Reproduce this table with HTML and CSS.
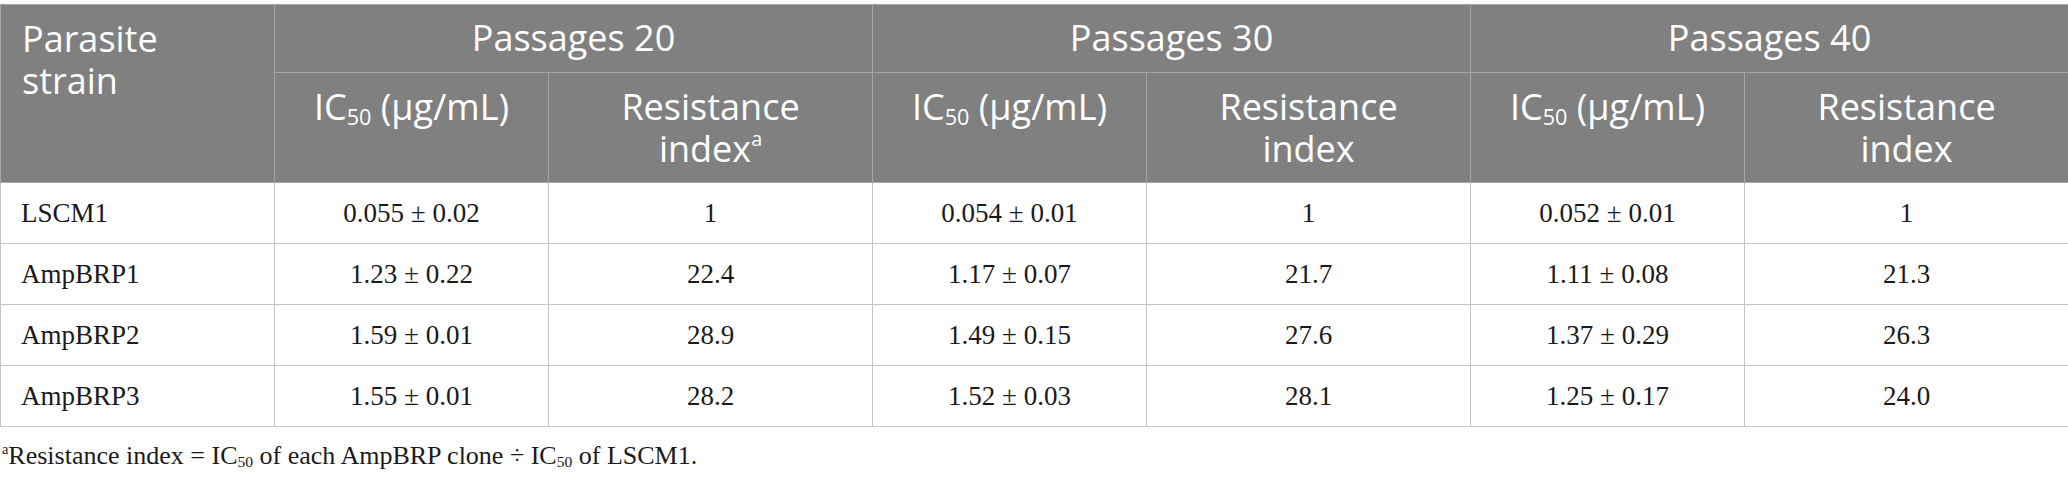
FILE: index.html
```html
<!DOCTYPE html>
<html>
<head>
<meta charset="utf-8">
<link rel="stylesheet" href="styles.css">
</head>
<body>
<table class="data">
  <colgroup>
    <col class="c-strain">
    <col class="c-ic">
    <col class="c-ri">
    <col class="c-ic">
    <col class="c-ri">
    <col class="c-ic">
    <col class="c-ri">
  </colgroup>
  <thead>
    <tr class="h1">
      <th class="strain" rowspan="2">Parasite<br>strain</th>
      <th colspan="2">Passages 20</th>
      <th colspan="2">Passages 30</th>
      <th colspan="2">Passages 40</th>
    </tr>
    <tr class="h2">
      <th>IC<sub>50</sub> (μg/mL)</th>
      <th>Resistance<br>index<sup>a</sup></th>
      <th>IC<sub>50</sub> (μg/mL)</th>
      <th>Resistance<br>index</th>
      <th>IC<sub>50</sub> (μg/mL)</th>
      <th>Resistance<br>index</th>
    </tr>
  </thead>
  <tbody>
    <tr>
      <td class="name">LSCM1</td>
      <td>0.055 ± 0.02</td><td>1</td>
      <td>0.054 ± 0.01</td><td>1</td>
      <td>0.052 ± 0.01</td><td>1</td>
    </tr>
    <tr>
      <td class="name">AmpBRP1</td>
      <td>1.23 ± 0.22</td><td>22.4</td>
      <td>1.17 ± 0.07</td><td>21.7</td>
      <td>1.11 ± 0.08</td><td>21.3</td>
    </tr>
    <tr>
      <td class="name">AmpBRP2</td>
      <td>1.59 ± 0.01</td><td>28.9</td>
      <td>1.49 ± 0.15</td><td>27.6</td>
      <td>1.37 ± 0.29</td><td>26.3</td>
    </tr>
    <tr>
      <td class="name">AmpBRP3</td>
      <td>1.55 ± 0.01</td><td>28.2</td>
      <td>1.52 ± 0.03</td><td>28.1</td>
      <td>1.25 ± 0.17</td><td>24.0</td>
    </tr>
  </tbody>
</table>
<p class="note"><sup>a</sup>Resistance index = IC<sub>50</sub> of each AmpBRP clone ÷ IC<sub>50</sub> of LSCM1.</p>
</body>
</html>
```
FILE: styles.css
```css
html, body {
  margin: 0;
  padding: 0;
  background: #ffffff;
}

body {
  padding-top: 4px;
}

.data {
  border-collapse: collapse;
  table-layout: fixed;
  width: 2068px;
}

.c-strain { width: 274px; }
.c-ic { width: 274px; }
.c-ri { width: 324px; }

.data th {
  background: #808080;
  color: #ffffff;
  font-family: "Open Sans", "Noto Sans", sans-serif;
  font-weight: 400;
  font-size: 36px;
  line-height: 42px;
  border: 1px solid #a6a6a6;
  text-align: center;
  vertical-align: top;
  padding: 0 10px;
}

.data .h1 th {
  height: 65px;
  vertical-align: middle;
  padding-top: 0;
  padding-bottom: 2px;
}

.data .h2 th {
  height: 96px;
  padding-top: 13px;
  padding-bottom: 0;
}

.data th.strain {
  text-align: left;
  vertical-align: top;
  padding: 13px 20px 0 21px;
}

.data th sub {
  font-size: 0.6em;
  vertical-align: -0.25em;
  line-height: 0;
}

.data th sup {
  font-size: 0.55em;
  vertical-align: 0.8em;
  line-height: 0;
}

.data td {
  font-family: "Liberation Serif", "Times New Roman", serif;
  font-size: 27px;
  color: #1a1a1a;
  border: 1px solid #c4c4c4;
  text-align: center;
  vertical-align: middle;
  height: 60px;
  padding: 0 10px;
}

.data td.name {
  text-align: left;
  padding-left: 20px;
}

.note {
  margin: 14px 0 0 2px;
  font-family: "Liberation Serif", "Times New Roman", serif;
  font-size: 26px;
  line-height: 30px;
  color: #1a1a1a;
}

.note sup {
  font-size: 0.55em;
  vertical-align: 0.7em;
  line-height: 0;
}

.note sub {
  font-size: 0.6em;
  vertical-align: -0.2em;
  line-height: 0;
}
```
